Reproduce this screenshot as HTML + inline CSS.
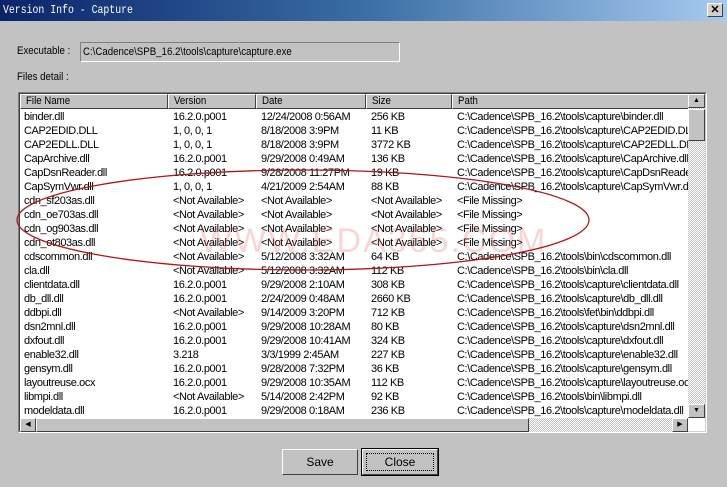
<!DOCTYPE html><html><head><style>
*{margin:0;padding:0;box-sizing:border-box}
body{width:727px;height:487px;background:#c2c2c2;font-family:"Liberation Sans",sans-serif;font-size:11px;color:#000;position:relative;overflow:hidden}
.t{position:absolute;white-space:nowrap;transform-origin:0 0;transform:scaleX(.88)}
#title{position:absolute;left:0;top:0;width:727px;height:21px;background:linear-gradient(90deg,#0a246a,#3a6ea5 50%,#a6caf0);color:#fff;font-family:"Liberation Mono",monospace;font-size:12px;line-height:21px}
#title span{position:absolute;left:3px;top:0;transform:scaleX(.82);transform-origin:0 0;white-space:nowrap}
#x{position:absolute;right:4px;top:3px;width:16px;height:14px;background:#d4d0c8;border:1px solid;border-color:#fff #404040 #404040 #fff;color:#000;font:bold 11px/12px "Liberation Sans",sans-serif;text-align:center}
#exe{position:absolute;left:80px;top:42px;width:320px;height:20px;border:1px solid;border-color:#808080 #fff #fff #808080;background:#c2c2c2}
#list{position:absolute;left:18px;top:92px;width:689px;height:341px;border:1px solid;border-color:#808080 #fff #fff #808080;background:#fff;overflow:hidden}
#list:before{content:"";position:absolute;inset:0;border:1px solid;border-color:#404040 #d4d0c8 #d4d0c8 #404040}
.h{position:absolute;top:1px;height:15px;background:#c2c2c2;border:1px solid;border-color:#fff #404040 #404040 #fff;padding-left:5px;line-height:13px}
.r{position:absolute;left:0;width:670px;height:14px;line-height:14px}
.r span{position:absolute;white-space:nowrap;overflow:hidden}
.c1{left:5px;width:145px}.c2{left:154px;width:85px}.c3{left:242px;width:108px}.c4{left:352px;width:84px}.c5{left:438px;width:232px}
#vs{position:absolute;left:669px;top:1px;width:17px;height:324px;background:repeating-conic-gradient(#c2c2c2 0 25%,#fff 0 50%) 0 0/2px 2px}
#hs{position:absolute;left:1px;top:325px;width:668px;height:14px;background:repeating-conic-gradient(#c2c2c2 0 25%,#fff 0 50%) 0 0/2px 2px}
.btn{position:absolute;background:#c2c2c2;border:1px solid;border-color:#fff #404040 #404040 #fff;text-align:center;font-size:12px}
.ar{position:absolute;width:16px;height:14px;background:#c2c2c2;border:1px solid;border-color:#fff #404040 #404040 #fff;font-size:7px;text-align:center;line-height:12px}
</style></head><body>
<div id="title"><span>Version Info - Capture</span><div id="x">✕</div></div>
<div class="t" style="left:17px;top:45px">Executable :</div>
<div id="exe"><div class="t" style="left:2px;top:3px">C:\Cadence\SPB_16.2\tools\capture\capture.exe</div></div>
<div class="t" style="left:17px;top:71px">Files detail :</div>
<div id="list">
<div class="h" style="left:1px;width:148px"><span class="t" style="position:relative;display:inline-block">File Name</span></div>
<div class="h" style="left:149px;width:88px"><span class="t" style="position:relative;display:inline-block">Version</span></div>
<div class="h" style="left:237px;width:110px"><span class="t" style="position:relative;display:inline-block">Date</span></div>
<div class="h" style="left:347px;width:86px"><span class="t" style="position:relative;display:inline-block">Size</span></div>
<div class="h" style="left:433px;width:237px"><span class="t" style="position:relative;display:inline-block">Path</span></div>
<div id="rows" style="position:absolute;left:0;top:17px;width:670px;height:308px;overflow:hidden;font-size:11px;letter-spacing:-.4px">
<div class="r" style="top:0"><span class="c1">binder.dll</span><span class="c2">16.2.0.p001</span><span class="c3">12/24/2008 0:56AM</span><span class="c4">256 KB</span><span class="c5">C:\Cadence\SPB_16.2\tools\capture\binder.dll</span></div>
<div class="r" style="top:14px"><span class="c1">CAP2EDID.DLL</span><span class="c2">1, 0, 0, 1</span><span class="c3">8/18/2008 3:9PM</span><span class="c4">11 KB</span><span class="c5">C:\Cadence\SPB_16.2\tools\capture\CAP2EDID.DLL</span></div>
<div class="r" style="top:28px"><span class="c1">CAP2EDLL.DLL</span><span class="c2">1, 0, 0, 1</span><span class="c3">8/18/2008 3:9PM</span><span class="c4">3772 KB</span><span class="c5">C:\Cadence\SPB_16.2\tools\capture\CAP2EDLL.DLL</span></div>
<div class="r" style="top:42px"><span class="c1">CapArchive.dll</span><span class="c2">16.2.0.p001</span><span class="c3">9/29/2008 0:49AM</span><span class="c4">136 KB</span><span class="c5">C:\Cadence\SPB_16.2\tools\capture\CapArchive.dll</span></div>
<div class="r" style="top:56px"><span class="c1">CapDsnReader.dll</span><span class="c2">16.2.0.p001</span><span class="c3">9/28/2008 11:27PM</span><span class="c4">19 KB</span><span class="c5">C:\Cadence\SPB_16.2\tools\capture\CapDsnReader.dll</span></div>
<div class="r" style="top:70px"><span class="c1">CapSymVwr.dll</span><span class="c2">1, 0, 0, 1</span><span class="c3">4/21/2009 2:54AM</span><span class="c4">88 KB</span><span class="c5">C:\Cadence\SPB_16.2\tools\capture\CapSymVwr.dll</span></div>
<div class="r" style="top:84px"><span class="c1">cdn_sf203as.dll</span><span class="c2">&lt;Not Available&gt;</span><span class="c3">&lt;Not Available&gt;</span><span class="c4">&lt;Not Available&gt;</span><span class="c5">&lt;File Missing&gt;</span></div>
<div class="r" style="top:98px"><span class="c1">cdn_oe703as.dll</span><span class="c2">&lt;Not Available&gt;</span><span class="c3">&lt;Not Available&gt;</span><span class="c4">&lt;Not Available&gt;</span><span class="c5">&lt;File Missing&gt;</span></div>
<div class="r" style="top:112px"><span class="c1">cdn_og903as.dll</span><span class="c2">&lt;Not Available&gt;</span><span class="c3">&lt;Not Available&gt;</span><span class="c4">&lt;Not Available&gt;</span><span class="c5">&lt;File Missing&gt;</span></div>
<div class="r" style="top:126px"><span class="c1">cdn_ot803as.dll</span><span class="c2">&lt;Not Available&gt;</span><span class="c3">&lt;Not Available&gt;</span><span class="c4">&lt;Not Available&gt;</span><span class="c5">&lt;File Missing&gt;</span></div>
<div class="r" style="top:140px"><span class="c1">cdscommon.dll</span><span class="c2">&lt;Not Available&gt;</span><span class="c3">5/12/2008 3:32AM</span><span class="c4">64 KB</span><span class="c5">C:\Cadence\SPB_16.2\tools\bin\cdscommon.dll</span></div>
<div class="r" style="top:154px"><span class="c1">cla.dll</span><span class="c2">&lt;Not Available&gt;</span><span class="c3">5/12/2008 3:32AM</span><span class="c4">112 KB</span><span class="c5">C:\Cadence\SPB_16.2\tools\bin\cla.dll</span></div>
<div class="r" style="top:168px"><span class="c1">clientdata.dll</span><span class="c2">16.2.0.p001</span><span class="c3">9/29/2008 2:10AM</span><span class="c4">308 KB</span><span class="c5">C:\Cadence\SPB_16.2\tools\capture\clientdata.dll</span></div>
<div class="r" style="top:182px"><span class="c1">db_dll.dll</span><span class="c2">16.2.0.p001</span><span class="c3">2/24/2009 0:48AM</span><span class="c4">2660 KB</span><span class="c5">C:\Cadence\SPB_16.2\tools\capture\db_dll.dll</span></div>
<div class="r" style="top:196px"><span class="c1">ddbpi.dll</span><span class="c2">&lt;Not Available&gt;</span><span class="c3">9/14/2009 3:20PM</span><span class="c4">712 KB</span><span class="c5">C:\Cadence\SPB_16.2\tools\fet\bin\ddbpi.dll</span></div>
<div class="r" style="top:210px"><span class="c1">dsn2mnl.dll</span><span class="c2">16.2.0.p001</span><span class="c3">9/29/2008 10:28AM</span><span class="c4">80 KB</span><span class="c5">C:\Cadence\SPB_16.2\tools\capture\dsn2mnl.dll</span></div>
<div class="r" style="top:224px"><span class="c1">dxfout.dll</span><span class="c2">16.2.0.p001</span><span class="c3">9/29/2008 10:41AM</span><span class="c4">324 KB</span><span class="c5">C:\Cadence\SPB_16.2\tools\capture\dxfout.dll</span></div>
<div class="r" style="top:238px"><span class="c1">enable32.dll</span><span class="c2">3.218</span><span class="c3">3/3/1999 2:45AM</span><span class="c4">227 KB</span><span class="c5">C:\Cadence\SPB_16.2\tools\capture\enable32.dll</span></div>
<div class="r" style="top:252px"><span class="c1">gensym.dll</span><span class="c2">16.2.0.p001</span><span class="c3">9/28/2008 7:32PM</span><span class="c4">36 KB</span><span class="c5">C:\Cadence\SPB_16.2\tools\capture\gensym.dll</span></div>
<div class="r" style="top:266px"><span class="c1">layoutreuse.ocx</span><span class="c2">16.2.0.p001</span><span class="c3">9/29/2008 10:35AM</span><span class="c4">112 KB</span><span class="c5">C:\Cadence\SPB_16.2\tools\capture\layoutreuse.ocx</span></div>
<div class="r" style="top:280px"><span class="c1">libmpi.dll</span><span class="c2">&lt;Not Available&gt;</span><span class="c3">5/14/2008 2:42PM</span><span class="c4">92 KB</span><span class="c5">C:\Cadence\SPB_16.2\tools\bin\libmpi.dll</span></div>
<div class="r" style="top:294px"><span class="c1">modeldata.dll</span><span class="c2">16.2.0.p001</span><span class="c3">9/29/2008 0:18AM</span><span class="c4">236 KB</span><span class="c5">C:\Cadence\SPB_16.2\tools\capture\modeldata.dll</span></div>
</div>
<div id="vs"><div class="ar" style="left:0;top:0;width:17px">▲</div><div style="position:absolute;left:0;top:15px;width:17px;height:32px;background:#c2c2c2;border:1px solid;border-color:#fff #404040 #404040 #fff"></div><div class="ar" style="left:0;top:310px;width:17px">▼</div></div>
<div id="hs"><div class="ar" style="left:0;top:0">◀</div><div style="position:absolute;left:16px;top:0;width:493px;height:14px;background:#c2c2c2;border:1px solid;border-color:#fff #404040 #404040 #fff"></div><div class="ar" style="left:652px;top:0">▶</div></div>
</div>
<div style="position:absolute;left:200px;top:222px;font-size:34px;color:rgba(230,90,90,.25);letter-spacing:2px;white-space:nowrap">WWW.EDA365.COM</div>
<svg style="position:absolute;left:0;top:0" width="727" height="487"><ellipse cx="303" cy="220" rx="286" ry="50" fill="none" stroke="#b01818" stroke-width="1.3"/></svg>
<div class="btn" style="left:282px;top:449px;width:76px;height:26px;line-height:24px">Save</div>
<div class="btn" style="left:362px;top:449px;width:76px;height:26px;line-height:24px;outline:1px solid #000"><div style="position:absolute;left:3px;top:3px;right:3px;bottom:3px;border:1px dotted #000"></div>Close</div>
</body></html>
